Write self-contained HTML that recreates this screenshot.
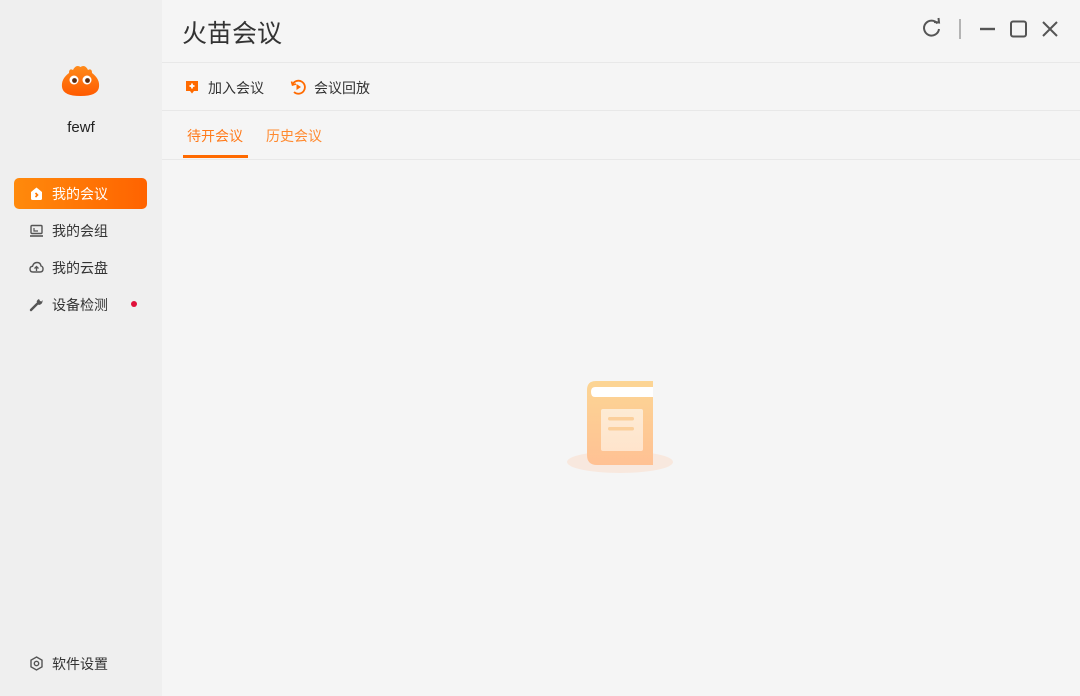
<!DOCTYPE html>
<html><head><meta charset="utf-8"><style>
*{margin:0;padding:0;box-sizing:border-box}
body{width:1080px;height:696px;overflow:hidden;background:#f5f5f5;font-family:"Liberation Sans","Noto Sans CJK SC",sans-serif;position:relative}
.side{position:absolute;left:0;top:0;width:162px;height:696px;background:#efefef}
.main{position:absolute;left:162px;top:0;right:0;height:696px;background:#f5f5f5}
.abs{position:absolute}
.nav{position:absolute;left:14px;width:133px;height:31px;font-size:14px;color:#333;display:flex;align-items:center;padding-left:15px}
.nav svg{margin-right:8px}
.hl{position:absolute;left:0;right:0;height:1px;background:#e8e8e8}
</style></head><body>
<div class="side">
  <svg class="abs" style="left:60px;top:63px" width="41" height="35" viewBox="0 0 41 35">
    <defs><linearGradient id="g" x1="0" y1="0" x2="0" y2="1"><stop offset="0" stop-color="#ff8a1a"/><stop offset="1" stop-color="#ff5a00"/></linearGradient></defs>
    <path d="M9 10 Q9 5 13 7 Q16 1 20.5 4 Q25 1 28 7 Q32 5 32 10 Q40 16 39 24 Q38 33 20.5 33 Q3 33 2 24 Q1 16 9 10Z" fill="url(#g)"/>
    <circle cx="14" cy="17" r="4.5" fill="#fff"/><circle cx="27" cy="17" r="4.5" fill="#fff"/>
    <circle cx="14.5" cy="17.5" r="2.4" fill="#5a2a10"/><circle cx="27.5" cy="17.5" r="2.4" fill="#5a2a10"/>
  </svg>
  <div class="abs" style="left:0;width:162px;top:119px;text-align:center;font-size:15px;color:#222">fewf</div>
  <div class="nav" style="top:178px;background:linear-gradient(90deg,#ff8a0c,#ff6300);border-radius:5px;color:#fff">
    <svg width="15" height="15" viewBox="0 0 15 15"><path d="M2 6 L7.5 1.5 L13 6 V12.5 Q13 14 11.5 14 H3.5 Q2 14 2 12.5Z" fill="#fff"/><path d="M6.5 7 L8.5 9 L6.5 11" stroke="#ff7500" stroke-width="1.6" fill="none"/></svg>我的会议</div>
  <div class="nav" style="top:215px"><svg width="15" height="15" viewBox="0 0 15 15"><rect x="2" y="2.5" width="11" height="8" rx="1" fill="none" stroke="#555" stroke-width="1.4"/><path d="M1 13 H14" stroke="#555" stroke-width="1.6"/><path d="M5 5 V8 H9" stroke="#555" stroke-width="1.2" fill="none"/></svg>我的会组</div>
  <div class="nav" style="top:252px"><svg width="15" height="15" viewBox="0 0 15 15"><path d="M4 12 Q1 12 1 9 Q1 6.5 3.5 6.3 Q4.5 2.5 8 2.5 Q11.5 2.5 12 6 Q14.2 6.5 14 9.3 Q13.8 12 11 12Z" fill="none" stroke="#555" stroke-width="1.4"/><path d="M7.5 11 V6.5 M5.5 8.5 L7.5 6.5 L9.5 8.5" stroke="#555" stroke-width="1.3" fill="none"/></svg>我的云盘</div>
  <div class="nav" style="top:289px"><svg width="15" height="15" viewBox="0 0 15 15"><path d="M2 13 L8 7" stroke="#555" stroke-width="2.4" stroke-linecap="round"/><path d="M8 7 Q7 3 10 2 L11 4 L12.5 4.5 L13.5 3 Q14 7 10 8Z" fill="#555"/></svg>设备检测</div>
  <div class="abs" style="left:131px;top:301px;width:6px;height:6px;border-radius:50%;background:#e0103a"></div>
  <div class="nav" style="top:648px"><svg width="15" height="15" viewBox="0 0 15 15"><path d="M7.5 1 L13 4.2 V10.8 L7.5 14 L2 10.8 V4.2Z" fill="none" stroke="#555" stroke-width="1.4"/><circle cx="7.5" cy="7.5" r="2.2" fill="none" stroke="#555" stroke-width="1.4"/></svg>软件设置</div>
</div>
<div class="main">
  <div class="abs" style="left:20px;top:14px;font-size:25px;color:#333">火苗会议</div>
  <svg class="abs" style="left:758px;top:17px" width="140" height="24" viewBox="0 0 140 24">
    <path d="M17.5 6.5 A7.5 7.5 0 1 0 19 12" fill="none" stroke="#555" stroke-width="2"/><path d="M14 5 L19 5.5 L18.5 1" fill="none" stroke="#555" stroke-width="2"/>
    <path d="M40 2 V22" stroke="#888" stroke-width="1.2"/>
    <path d="M60 12 H75" stroke="#555" stroke-width="2.4"/>
    <rect x="91" y="4.5" width="15" height="15" rx="2" fill="none" stroke="#555" stroke-width="2"/>
    <path d="M123 5 L137 19 M137 5 L123 19" stroke="#555" stroke-width="2"/>
  </svg>
  <div class="hl" style="top:62px"></div>
  <svg class="abs" style="left:22px;top:79px" width="16" height="16" viewBox="0 0 16 16"><path d="M2 2 H14 V12 H10 L8 14.5 L6 12 H2Z" fill="#ff6a00"/><path d="M8 4.5 V9.5 M5.5 7 H10.5" stroke="#fff" stroke-width="1.8"/></svg>
  <div class="abs" style="left:46px;top:78px;font-size:14px;color:#333">加入会议</div>
  <svg class="abs" style="left:128px;top:79px" width="16" height="16" viewBox="0 0 16 16"><path d="M4 13 A6.5 6.5 0 1 0 2.5 5.5" fill="none" stroke="#ff6a00" stroke-width="1.8"/><path d="M1.5 2.5 L2.5 6 L6 5" fill="none" stroke="#ff6a00" stroke-width="1.6"/><path d="M6.5 5 L11 8 L6.5 11Z" fill="#ff6a00"/></svg>
  <div class="abs" style="left:152px;top:78px;font-size:14px;color:#333">会议回放</div>
  <div class="hl" style="top:110px"></div>
  <div class="abs" style="left:25px;top:126px;font-size:14px;color:#ff7a1a">待开会议</div>
  <div class="abs" style="left:104px;top:126px;font-size:14px;color:#ff8a30">历史会议</div>
  <div class="abs" style="left:21px;top:155px;width:65px;height:3px;background:#ff6a00"></div>
  <div class="hl" style="top:159px"></div>
  <svg class="abs" style="left:404px;top:380px" width="110" height="95" viewBox="0 0 110 95">
    <defs><linearGradient id="b" x1="0" y1="0" x2="0" y2="1"><stop offset="0" stop-color="#fcd594"/><stop offset="1" stop-color="#ffc194"/></linearGradient>
    <linearGradient id="p" x1="0" y1="0" x2="0" y2="1"><stop offset="0" stop-color="#fdebd4"/><stop offset="1" stop-color="#ffe4cc"/></linearGradient></defs>
    <ellipse cx="54" cy="82" rx="53" ry="11" fill="#f8e8de"/>
    <path d="M30 1 H87 V85 H31 Q21 85 21 75 V10 Q21 1 30 1Z" fill="url(#b)"/>
    <path d="M29 7 H87 V17 H29 Q25 17 25 12 Q25 7 29 7Z" fill="#fff"/>
    <rect x="35" y="29" width="42" height="42" rx="2" fill="url(#p)"/>
    <rect x="42" y="37" width="26" height="3.5" rx="1.7" fill="#fbcf9b"/><rect x="42" y="47" width="26" height="3.5" rx="1.7" fill="#fbcf9b"/>
  </svg>
</div>
</body></html>
